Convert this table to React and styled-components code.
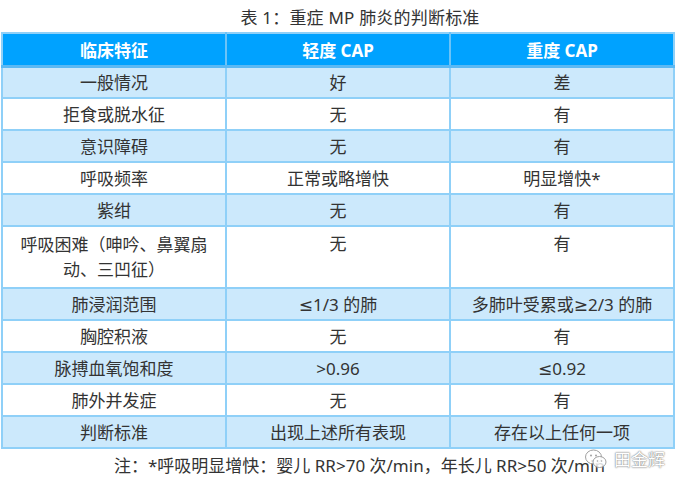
import React from 'react';
import styled, { createGlobalStyle } from 'styled-components';

const GlobalStyle = createGlobalStyle`
  html, body {
    margin: 0;
    padding: 0;
    background: #ffffff;
  }
  body {
    font-family: "Noto Sans", "DejaVu Sans", "Noto Sans CJK SC", sans-serif;
    color: #333333;
  }
`;

const Page = styled.div`
  position: relative;
  width: 688px;
  height: 486px;
  overflow: hidden;
  padding-left: 1px;
  box-sizing: border-box;
`;

const Caption = styled.div`
  height: 32px;
  width: 674px;
  box-sizing: border-box;
  padding-left: 44px;
  display: flex;
  align-items: center;
  justify-content: center;
  font-size: 17px;
  color: #333;
  letter-spacing: 0.2px;
`;

const Table = styled.table`
  width: 674px;
  border-collapse: collapse;
  table-layout: fixed;
  font-size: 17px;
  border: 2px solid #8fd0f8;
`;

const HeadCell = styled.th`
  height: 33px;
  box-sizing: border-box;
  padding: 0;
  background: #00a2ff;
  color: #ffffff;
  font-weight: 700;
  font-size: 17px;
  text-align: center;
  border-left: 2px solid #6cc3f7;
  border-bottom: 3px solid #5bb9f4;
  &:first-child {
    border-left: none;
  }
`;

const Row = styled.tr`
  background: ${(p) => (p.$shade ? '#cce9fc' : '#ffffff')};
`;

const Cell = styled.td`
  height: ${(p) => (p.$tall ? 62 : 32)}px;
  padding: 0 2px;
  box-sizing: border-box;
  text-align: center;
  vertical-align: ${(p) => (p.$top ? 'top' : 'middle')};
  padding-top: ${(p) => (p.$top ? '4px' : '0')};
  line-height: 25px;
  color: #333;
  border-left: 2px solid #8fd0f8;
  border-top: 2px solid #8fd0f8;
  &:first-child {
    border-left: none;
  }
`;

const Note = styled.div`
  height: 30px;
  display: flex;
  align-items: center;
  padding-left: 113px;
  font-size: 17px;
  color: #333;
`;

const Watermark = styled.div`
  position: absolute;
  left: 584px;
  top: 446px;
  display: flex;
  align-items: center;
  gap: 6px;
  color: #ffffff;
  font-size: 17px;
  text-shadow: 0 0 1px #666, 0 0 2px #888;
  opacity: 0.92;
`;

const rows = [
  ['一般情况', '好', '差'],
  ['拒食或脱水征', '无', '有'],
  ['意识障碍', '无', '有'],
  ['呼吸频率', '正常或略增快', '明显增快*'],
  ['紫绀', '无', '有'],
  [['呼吸困难（呻吟、鼻翼扇', '动、三凹征）'], '无', '有'],
  ['肺浸润范围', '≤1/3 的肺', '多肺叶受累或≥2/3 的肺'],
  ['胸腔积液', '无', '有'],
  ['脉搏血氧饱和度', '>0.96', '≤0.92'],
  ['肺外并发症', '无', '有'],
  ['判断标准', '出现上述所有表现', '存在以上任何一项'],
];

function WeChatMark() {
  return (
    <svg width="24" height="22" viewBox="0 0 24 22">
      <ellipse cx="9.5" cy="9" rx="8" ry="7" fill="rgba(255,255,255,0.85)" stroke="#9a9a9a" strokeWidth="1" />
      <ellipse cx="15.5" cy="14" rx="6.5" ry="5.5" fill="rgba(255,255,255,0.9)" stroke="#9a9a9a" strokeWidth="1" />
      <circle cx="7" cy="7.5" r="1" fill="#9a9a9a" />
      <circle cx="12" cy="7.5" r="1" fill="#9a9a9a" />
      <circle cx="13.5" cy="13" r="0.8" fill="#9a9a9a" />
      <circle cx="17.5" cy="13" r="0.8" fill="#9a9a9a" />
    </svg>
  );
}

const App = () => {
  return (
    <Page>
      <GlobalStyle />
      <Caption>表 1：重症 MP 肺炎的判断标准</Caption>
      <Table>
        <colgroup>
          <col style={{ width: '224px' }} />
          <col style={{ width: '224px' }} />
          <col style={{ width: '224px' }} />
        </colgroup>
        <thead>
          <tr>
            <HeadCell>临床特征</HeadCell>
            <HeadCell>轻度 CAP</HeadCell>
            <HeadCell>重度 CAP</HeadCell>
          </tr>
        </thead>
        <tbody>
          {rows.map((r, i) => {
            const tall = Array.isArray(r[0]);
            return (
              <Row key={i} $shade={i % 2 === 0}>
                <Cell $tall={tall}>
                  {tall ? (
                    <>
                      {r[0][0]}
                      <br />
                      {r[0][1]}
                    </>
                  ) : (
                    r[0]
                  )}
                </Cell>
                <Cell $tall={tall} $top={tall}>{r[1]}</Cell>
                <Cell $tall={tall} $top={tall}>{r[2]}</Cell>
              </Row>
            );
          })}
        </tbody>
      </Table>
      <Note>注：*呼吸明显增快：婴儿 RR&gt;70 次/min，年长儿 RR&gt;50 次/min</Note>
      <Watermark>
        <WeChatMark />
        <span>田金辉</span>
      </Watermark>
    </Page>
  );
};

export default App;
